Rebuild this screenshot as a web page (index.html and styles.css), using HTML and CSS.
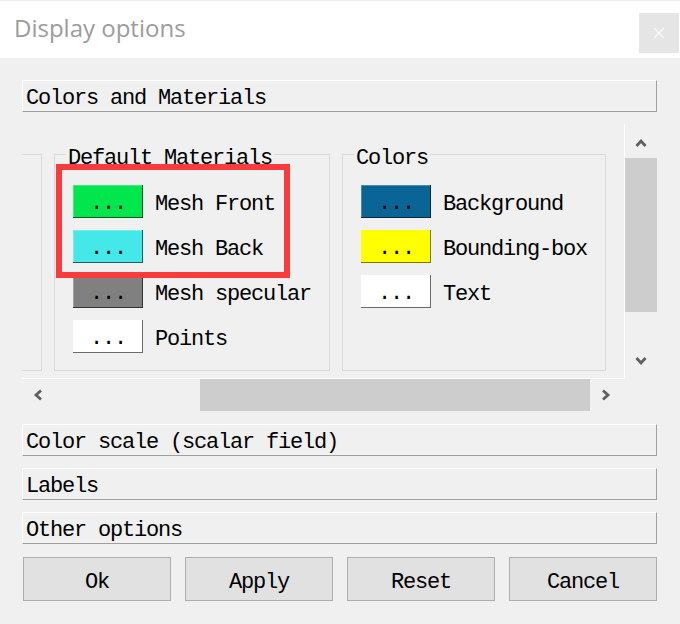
FILE: index.html
```html
<!DOCTYPE html>
<html>
<head>
<meta charset="utf-8">
<title>Display options</title>
<link rel="stylesheet" href="styles.css">
</head>
<body>
<div class="titlebar">
  <span class="title">Display options</span>
  <div class="close"><svg width="12" height="12" viewBox="0 0 12 12"><path d="M1 1L11 11M11 1L1 11" stroke="#f7f7f7" stroke-width="1.6" fill="none"/></svg></div>
</div>
<div class="main">
  <div class="section">Colors and Materials</div>
  <div class="scrollarea">
    <div class="viewport">
      <div class="content">
        <div class="group partial"></div>
        <div class="group gm">
          <span class="gtitle">Default Materials</span>
          <div class="row"><div class="swatch green">...</div><span class="lbl">Mesh Front</span></div>
          <div class="row"><div class="swatch cyan">...</div><span class="lbl">Mesh Back</span></div>
          <div class="row"><div class="swatch gray">...</div><span class="lbl">Mesh specular</span></div>
          <div class="row"><div class="swatch white">...</div><span class="lbl">Points</span></div>
          <div class="highlight"></div>
        </div>
        <div class="group gc">
          <span class="gtitle">Colors</span>
          <div class="row"><div class="swatch blue">...</div><span class="lbl">Background</span></div>
          <div class="row"><div class="swatch yellow">...</div><span class="lbl">Bounding-box</span></div>
          <div class="row"><div class="swatch white">...</div><span class="lbl">Text</span></div>
        </div>
      </div>
    </div>
    <div class="vbar">
      <svg class="arr-up" width="12" height="10" viewBox="0 0 12 10"><path d="M1.5 8L6 3L10.5 8" stroke="#606060" stroke-width="2.8" fill="none"/></svg>
      <div class="vthumb"></div>
      <svg class="arr-down" width="12" height="10" viewBox="0 0 12 10"><path d="M1.5 2L6 7L10.5 2" stroke="#606060" stroke-width="2.8" fill="none"/></svg>
    </div>
    <div class="hbar">
      <svg class="arr-left" width="10" height="12" viewBox="0 0 10 12"><path d="M8 1.5L3 6L8 10.5" stroke="#606060" stroke-width="2.8" fill="none"/></svg>
      <div class="hthumb"></div>
      <svg class="arr-right" width="10" height="12" viewBox="0 0 10 12"><path d="M2 1.5L7 6L2 10.5" stroke="#606060" stroke-width="2.8" fill="none"/></svg>
    </div>
    <div class="corner"></div>
  </div>
  <div class="section first">Color scale (scalar field)</div>
  <div class="section">Labels</div>
  <div class="section">Other options</div>
  <div class="buttons">
    <div class="btn">Ok</div>
    <div class="btn">Apply</div>
    <div class="btn">Reset</div>
    <div class="btn">Cancel</div>
  </div>
</div>
</body>
</html>
```
FILE: styles.css
```css
* { box-sizing: border-box; }
html, body { margin: 0; padding: 0; }
body {
  width: 680px;
  height: 624px;
  overflow: hidden;
  background: #f0f0f0;
  font-family: "Liberation Mono", monospace;
  font-size: 22px;
  letter-spacing: -1.2px;
  color: #000;
}
.titlebar {
  height: 58px;
  background: #fff;
  border-top: 1px solid #eeeeee;
  display: flex;
  justify-content: space-between;
  align-items: flex-start;
}
.title {
  font-family: "Open Sans", "Noto Sans", sans-serif;
  font-size: 24px;
  letter-spacing: 0;
  line-height: 30px;
  color: #9c9c9c;
  margin: 12px 0 0 14px;
}
.close {
  width: 40px;
  height: 40px;
  margin: 12px 1px 0 0;
  background: #e5e5e5;
  display: flex;
  align-items: center;
  justify-content: center;
}
.main {
  padding: 22px 23px 0 22px;
  display: flex;
  flex-direction: column;
}
.section {
  height: 32px;
  border: 1px solid;
  border-color: #fff #a0a0a0 #a0a0a0 #fff;
  padding: 5px 0 0 3px;
  line-height: 26px;
  white-space: nowrap;
  overflow: hidden;
  margin-top: 12px;
}
.main > .section:first-child { margin-top: 0; }
.section.first { margin-top: 13px; }
.scrollarea {
  margin-top: 12px;
  display: grid;
  grid-template-columns: 603px 32px;
  grid-template-rows: 255px 32px;
}
.viewport {
  overflow: hidden;
  border-right: 1px solid #fff;
  border-bottom: 1px solid #fff;
}
.content {
  display: flex;
  gap: 12px;
  margin-top: 30px;
}
.group {
  flex: none;
  position: relative;
  border: 1px solid #dadada;
  padding: 30px 18px 17px 18px;
  display: flex;
  flex-direction: column;
  gap: 12px;
}
.partial { width: 100px; margin-left: -80px; }
.gm { width: 276px; }
.gc { width: 264px; }
.gtitle {
  position: absolute;
  top: -7px;
  left: 11px;
  padding: 0 2px;
  background: #f0f0f0;
  line-height: 22px;
  white-space: nowrap;
}
.row {
  display: flex;
  align-items: flex-start;
  gap: 12px;
  height: 33px;
  white-space: nowrap;
}
.lbl {
  line-height: 22px;
  padding-top: 9px;
}
.swatch {
  flex: none;
  width: 70px;
  height: 33px;
  text-align: center;
  line-height: 22px;
  padding-top: 8px;
  box-shadow: inset -1px -1px 0 rgba(0, 0, 0, 0.6), inset 1px 1px 0 rgba(255, 255, 255, 0.25);
}
.green { background: #00e64c; }
.cyan { background: #45e8e8; }
.gray { background: #808080; }
.white { background: #ffffff; box-shadow: inset -1px -1px 0 #6a6a6a; }
.blue { background: #0a6496; }
.yellow { background: #ffff00; box-shadow: inset -1px -1px 0 #7a7a00; }
.highlight {
  position: absolute;
  left: 1px;
  top: 9px;
  width: 234px;
  height: 114px;
  border: 6px solid #f93b3b;
}
.vbar {
  display: flex;
  flex-direction: column;
  align-items: center;
}
.arr-up { margin-top: 14px; flex: none; }
.vthumb { width: 32px; height: 154px; margin-top: 10px; background: #cdcdcd; flex: none; }
.arr-down { margin-top: 44px; flex: none; }
.hbar {
  display: flex;
  align-items: center;
}
.arr-left { margin-left: 11px; flex: none; }
.hthumb { width: 390px; height: 32px; margin-left: 157px; background: #cdcdcd; flex: none; }
.arr-right { margin-left: 11px; flex: none; }
.buttons {
  margin-top: 13px;
  padding-left: 1px;
  display: flex;
  gap: 14px;
}
.btn {
  width: 148px;
  height: 44px;
  background: #e1e1e1;
  border: 1px solid #adadad;
  display: flex;
  align-items: center;
  justify-content: center;
  padding-top: 6px;
}
```
